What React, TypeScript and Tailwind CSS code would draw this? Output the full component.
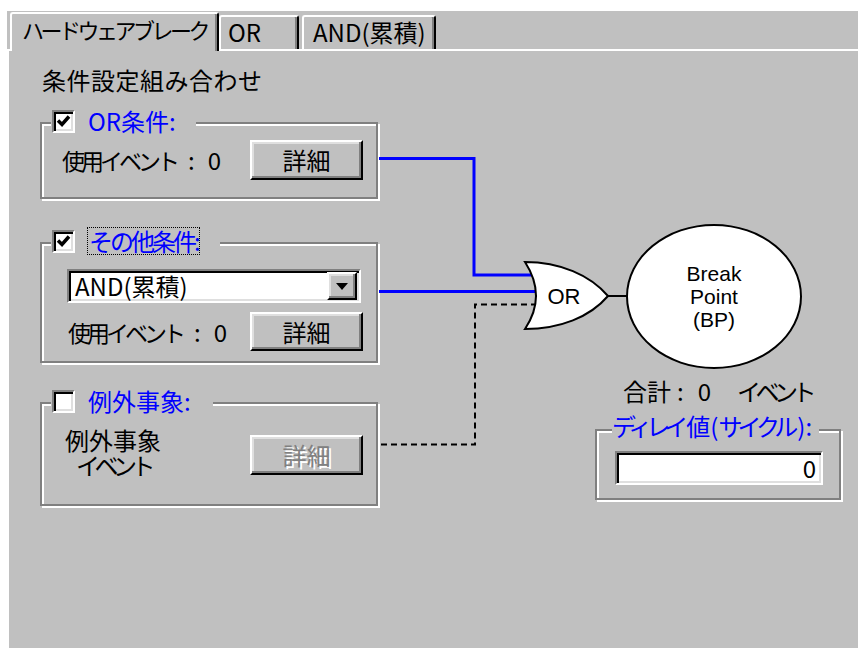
import React from "react"

const raised =
    "border-2 border-t-white border-l-white border-r-black border-b-black shadow-[inset_-2px_-2px_0_#808080,inset_2px_2px_0_#dfdfdf] bg-[#c0c0c0]"
const sunken =
    "border-2 border-t-[#808080] border-l-[#808080] border-r-white border-b-white shadow-[inset_2px_2px_0_#000,inset_-2px_-2px_0_#dfdfdf] bg-white"

const CheckBox = ({ checked }: { checked: boolean }) => (
    <div className={`w-[23px] h-[23px] shrink-0 flex items-center justify-center ${sunken}`}>
        {checked && (
            <svg width="15" height="15" viewBox="0 0 15 15">
                <path d="M2 6.5 L6 10.5 L13 2.5" fill="none" stroke="#000" strokeWidth="3.5" />
            </svg>
        )}
    </div>
)

const DetailButton = ({ disabled, h }: { disabled?: boolean; h: string }) => (
    <div className={`w-[113px] ${h} shrink-0 flex items-center justify-center ${raised}`}>
        <span className={disabled ? "text-[#808080] [text-shadow:2px_2px_0_#fff]" : ""}>詳細</span>
    </div>
)

// 使用イベント : 0
const EventCount = ({ w }: { w: string }) => (
    <div className={`${w} flex items-center`}>
        <span className="text-[23px] tracking-[-4px]">使用イベント</span>
        <span className="ml-[12px]">:</span>
        <span className="ml-[13px]">0</span>
    </div>
)

interface GroupProps {
    className: string;
    legend: React.ReactNode;
    legendClass: string;
    children?: React.ReactNode;
}

const Group: React.FC<GroupProps> = ({ className, legend, legendClass, children }) => (
    <div className={`relative shrink-0 border-2 border-[#808080] shadow-[inset_2px_2px_0_#fff,2px_2px_0_#fff] ${className}`}>
        <div className={`absolute flex items-center h-[24px] bg-[#c0c0c0] whitespace-nowrap ${legendClass}`}>{legend}</div>
        {children}
    </div>
)

const Tabs = () => (
    <div className="h-[38px] shrink-0 flex items-end pl-[3px] whitespace-nowrap">
        <div className="relative z-10 h-[39px] -mb-[2px] w-[209px] bg-[#c0c0c0] border-t-2 border-l-2 border-r-2 border-t-white border-l-white border-r-black rounded-t-[3px] shadow-[inset_-2px_0_0_#808080] pl-[10px] pt-[3px] text-[22px] tracking-[-3.5px]">
            ハードウェアブレーク
        </div>
        <div className="h-[34px] w-[80px] bg-[#c0c0c0] border-t-2 border-l-2 border-r-2 border-t-white border-l-white border-r-black rounded-t-[3px] shadow-[inset_-2px_0_0_#808080] pl-[7px] pt-[3px]">
            OR
        </div>
        <div className="ml-[3px] h-[34px] w-[134px] bg-[#c0c0c0] border-t-2 border-l-2 border-r-2 border-t-white border-l-white border-r-black rounded-t-[3px] shadow-[inset_-2px_0_0_#808080] pl-[9px] pt-[3px]">
            AND(累積)
        </div>
    </div>
)

const Wires = () => (
    <svg className="absolute left-0 top-0 pointer-events-none" width="858" height="600">
        <g transform="translate(-9 -51)">
            <polyline points="379,158.5 474,158.5 474,275 532,275" fill="none" stroke="#0000ff" strokeWidth="3" />
            <polyline points="379,291.5 538,291.5" fill="none" stroke="#0000ff" strokeWidth="3" />
            <polyline points="381,444.5 475,444.5 475,304.5 538,304.5" fill="none" stroke="#000" strokeWidth="2" strokeDasharray="6 4" />
            <path
                d="M525 262 C560 262 590 275 608 296 C590 317 560 329 525 329 Q547 296 525 262 Z"
                fill="#fff"
                stroke="#000"
                strokeWidth="2"
            />
            <text x="564" y="304" textAnchor="middle" fontSize="22" fontFamily="Liberation Sans, sans-serif">OR</text>
            <line x1="607" y1="296" x2="628" y2="296" stroke="#000" strokeWidth="2" />
        </g>
    </svg>
)

export default function App() {
    return (
        <div className="w-[858px] h-[648px] overflow-hidden bg-white pt-[11px] pl-[7px] font-['Noto_Sans_CJK_JP',sans-serif] text-[24px] leading-[24px] text-black">
            <div className="h-full bg-[#c0c0c0] flex flex-col">
                <Tabs />
                <div className="relative flex-1 flex border-t-2 border-l-2 border-white pt-[17px] pl-[31px]">
                    <div className="w-[338px] shrink-0 flex flex-col">
                        <div className="h-[24px] pl-[2px] tracking-[0.5px]">条件設定組み合わせ</div>

                        <Group
                            className="mt-[30px] h-[77px]"
                            legendClass="left-[9px] top-[-15px] pl-[1px] pr-[20px]"
                            legend={
                                <>
                                    <CheckBox checked />
                                    <span className="ml-[13px] text-[#0000ff]">OR条件:</span>
                                </>
                            }
                        >
                            <div className="flex items-center pt-[16px] pl-[20px]">
                                <EventCount w="w-[188px]" />
                                <DetailButton h="h-[40px]" />
                            </div>
                        </Group>

                        <Group
                            className="mt-[43px] h-[121px]"
                            legendClass="left-[9px] top-[-15px] pl-[1px] pr-[20px]"
                            legend={
                                <>
                                    <CheckBox checked />
                                    <span className="ml-[12px] px-[1px] h-[28px] leading-[26px] border border-dotted border-black text-[#0000ff] tracking-[-3px]">
                                        その他条件:
                                    </span>
                                </>
                            }
                        >
                            <div className="flex flex-col pt-[25px] pl-[25px]">
                                <div className={`w-[294px] h-[34px] flex items-center justify-between pl-[6px] pr-[2px] ${sunken}`}>
                                    <span>AND(累積)</span>
                                    <div className={`w-[30px] h-[28px] flex items-center justify-center ${raised}`}>
                                        <svg width="12" height="7" viewBox="0 0 12 7">
                                            <path d="M0 0 H12 L6 7 Z" fill="#000" />
                                        </svg>
                                    </div>
                                </div>
                                <div className="flex items-center mt-[9px] pl-[1px]">
                                    <EventCount w="w-[182px]" />
                                    <DetailButton h="h-[39px]" />
                                </div>
                            </div>
                        </Group>

                        <Group
                            className="mt-[39px] h-[104px]"
                            legendClass="left-[9px] top-[-15px] pl-[1px] pr-[22px]"
                            legend={
                                <>
                                    <CheckBox checked={false} />
                                    <span className="ml-[13px] text-[#0000ff]">例外事象:</span>
                                </>
                            }
                        >
                            <div className="flex items-start pt-[24px] pl-[23px]">
                                <div className="w-[96px] flex flex-col items-center">
                                    <span className="h-[25px]">例外事象</span>
                                    <span className="h-[25px] tracking-[-5.5px]">イベント</span>
                                </div>
                                <div className="ml-[89px] mt-[7px]">
                                    <DetailButton disabled h="h-[40px]" />
                                </div>
                            </div>
                        </Group>
                    </div>

                    <div className="ml-[217px] mt-[156px] w-[246px] shrink-0 flex flex-col">
                        <div className="ml-[31px] w-[176px] h-[145px] rounded-[50%] border-2 border-black bg-white flex flex-col items-center justify-center font-['Liberation_Sans',sans-serif] text-[21px] leading-[23px]">
                            <span>Break</span>
                            <span>Point</span>
                            <span>(BP)</span>
                        </div>
                        <div className="ml-[28px] mt-[10px] h-[24px] flex">
                            <span>合計</span>
                            <span className="ml-[6px]">:</span>
                            <span className="ml-[14px]">0</span>
                            <span className="ml-[26px] tracking-[-5.5px]">イベント</span>
                        </div>
                        <Group
                            className="mt-[26px] h-[71px]"
                            legendClass="left-[15px] top-[-17px] pr-[7px]"
                            legend={
                                <span className="text-[#0000ff]">
                                    <span className="tracking-[-6px]">ディレイ</span>
                                    <span className="ml-[4px]">値(</span>
                                    <span className="tracking-[-5px]">サイクル</span>
                                    <span className="ml-[4px]">):</span>
                                </span>
                            }
                        >
                            <div className="pt-[20px] pl-[18px]">
                                <div className={`w-[208px] h-[34px] flex items-center justify-end pr-[5px] ${sunken}`}>0</div>
                            </div>
                        </Group>
                    </div>

                    <Wires />
                </div>
            </div>
        </div>
    )
}
